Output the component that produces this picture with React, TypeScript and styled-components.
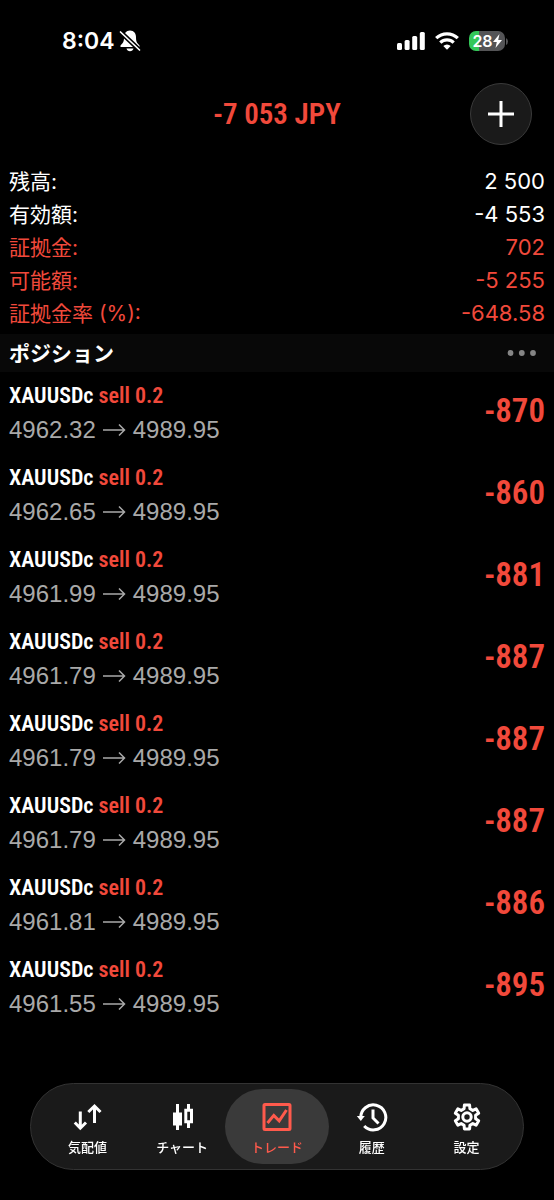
import React from "react";
import styled, { createGlobalStyle } from "styled-components";

const RED = "#f1493b";
const sans = '"Inter", "Noto Sans CJK JP", sans-serif';
const narrow = '"Roboto Condensed", "Liberation Sans Narrow", "Noto Sans CJK JP", sans-serif';

const GlobalStyle = createGlobalStyle`
  * { box-sizing: border-box; }
  body { margin: 0; background: #000; color: #fff; font-family: ${sans}; }
  button { border: 0; padding: 0; background: none; color: inherit; font: inherit; cursor: pointer; }
  h1, h2, p, dl, dd, dt, ul { margin: 0; padding: 0; font: inherit; }
`;

const Screen = styled.div`
  min-height: 100vh;
  padding-bottom: 118px;
`;

const StatusBar = styled.div`
  display: flex;
  align-items: center;
  justify-content: space-between;
  height: 82px;
  padding: 0 46px 0 62px;
`;

const StatusGroup = styled.div<{ $gap: number }>`
  display: flex;
  align-items: center;
  gap: ${(p) => p.$gap}px;
`;

const Clock = styled.time`
  font-size: 23px;
  line-height: 28px;
  font-weight: 600;
`;

const Battery = styled.div`
  display: flex;
  align-items: center;
  gap: 1px;
`;

const BatteryBody = styled.div`
  display: flex;
  align-items: center;
  justify-content: center;
  width: 36px;
  height: 20px;
  border-radius: 7px;
  background: linear-gradient(to right, #34c759 28%, #545456 28%);
  font-size: 16px;
  line-height: 20px;
  font-weight: 600;
`;

const Header = styled.header`
  display: grid;
  grid-template-columns: 1fr auto 1fr;
  align-items: center;
  height: 64px;
  padding: 0 22px;
`;

const Total = styled.h1`
  grid-column: 2;
  color: ${RED};
  font-family: ${narrow};
  font-size: 29px;
  line-height: 36px;
  font-weight: 600;
`;

const AddButton = styled.button`
  display: grid;
  place-items: center;
  justify-self: end;
  width: 62px;
  height: 62px;
  border: 1px solid #3a3a3a;
  border-radius: 50%;
  background: #1a1a1a;
`;

const Summary = styled.dl`
  padding: 19px 9px 4px;
`;

const SummaryRow = styled.div<{ $alert?: boolean }>`
  display: flex;
  justify-content: space-between;
  color: ${(p) => (p.$alert ? RED : "#fff")};
  font-size: 22px;
  line-height: 33px;
`;

const Label = styled.dt`
  font-size: 21px;
`;

const SectionBar = styled.div`
  display: flex;
  align-items: center;
  justify-content: space-between;
  height: 38px;
  padding: 0 17px 0 9px;
  background: #080808;
`;

const SectionTitle = styled.h2`
  padding-bottom: 2px;
  font-family: "Noto Sans CJK JP", sans-serif;
  font-size: 21px;
  line-height: 30px;
  font-weight: 700;
`;

const MoreButton = styled.button`
  display: flex;
`;

const List = styled.ul`
  list-style: none;
`;

const Position = styled.li`
  display: flex;
  align-items: center;
  justify-content: space-between;
  height: 82px;
  padding: 0 9px;
`;

const Symbol = styled.p`
  font-family: ${narrow};
  font-size: 22px;
  line-height: 34px;
  font-weight: 600;
`;

const Side = styled.span`
  color: ${RED};
`;

const Prices = styled.p`
  display: flex;
  align-items: center;
  gap: 7px;
  color: #a9a9a9;
  font-family: "Liberation Sans", sans-serif;
  font-size: 24px;
  line-height: 34px;
`;

const Profit = styled.span`
  padding-bottom: 4px;
  color: ${RED};
  font-family: ${narrow};
  font-size: 33px;
  line-height: 40px;
  font-weight: 600;
`;

const TabBar = styled.nav`
  position: fixed;
  left: 30px;
  right: 30px;
  bottom: 30px;
  display: grid;
  grid-template-columns: repeat(5, 1fr);
  height: 87px;
  padding: 5px 9px;
  border: 1px solid #333;
  border-radius: 44px;
  background: #1a1a1a;
`;

const Tab = styled.button<{ $active?: boolean }>`
  display: flex;
  flex-direction: column;
  align-items: center;
  justify-content: center;
  gap: 4px;
  margin: 0 -5px;
  padding-top: 4px;
  border-radius: 38px;
  background: ${(p) => (p.$active ? "#3a3a3a" : "transparent")};
  color: ${(p) => (p.$active ? "#ff5a4c" : "#fff")};
`;

const TabLabel = styled.span`
  font-family: "Noto Sans CJK JP", sans-serif;
  font-size: 13px;
  line-height: 20px;
  font-weight: 500;
`;

const TabIcon = ({ children }: { children: React.ReactNode }) => (
  <svg width="32" height="32" viewBox="0 0 32 32" fill="none" stroke="currentColor" strokeWidth="3" aria-hidden="true">
    {children}
  </svg>
);

const QuotesIcon = () => (
  <TabIcon>
    <path d="M9.3 10.5V27M3.8 21.5l5.500 5.700 5.700-5.700M23.500 22V5M17.300 11l6.200-6 6 6" />
  </TabIcon>
);

const ChartIcon = () => (
  <TabIcon>
    <path d="M7 11.500h9v13H7z" fill="currentColor" stroke="none" />
    <path d="M11.500 3v26M22.500 3v6M22.500 20v7M19.800 9.300h5.700v11.400h-5.700z" />
  </TabIcon>
);

const TradeIcon = () => (
  <TabIcon>
    <rect x="3" y="3.500" width="26" height="25" rx="1" />
    <path d="M6.500 22l6.300-7.600 5.400 5.400L25.500 9" />
  </TabIcon>
);

const HistoryIcon = () => (
  <TabIcon>
    <path d="M4.800 17A12.500 12.500 0 1 1 8.200 25" />
    <path d="M.8 15h8L4.800 20z" fill="currentColor" stroke="none" />
    <path d="M17 8.500v8.500l5.500 5.500" />
  </TabIcon>
);

const SettingsIcon = () => (
  <TabIcon>
    <path
      d="M13.100 7.700L13.400 4h5.200l.3 3.700 2.900 1.700 3.300-1.600 2.600 4.400-3.100 2.100v3.400l3.100 2.100-2.600 4.400-3.300-1.600-2.900 1.700-.3 3.700h-5.200l-.3-3.700-2.900-1.700-3.300 1.600-2.600-4.400 3.100-2.100v-3.400l-3.100-2.100 2.600-4.400 3.300 1.600z"
      strokeLinejoin="round"
    />
    <circle cx="16" cy="16" r="4.200" />
  </TabIcon>
);

const MutedBellIcon = () => (
  <svg width="22" height="22" viewBox="0 0 22 22" aria-hidden="true">
    <path
      d="M11 .5C7 .5 5 3.500 5 7.500 5 12 4 13 1.500 15.500V17h19v-1.500C18 13 17 12 17 7.500 17 3.500 15 .5 11 .5zM7.500 18.500h7c-.5 1.700-1.700 2.700-3.500 2.700s-3-1-3.500-2.700z"
      fill="#fff"
    />
    <path d="M.5 1l21 20" stroke="#000" strokeWidth="4.600" />
    <path d="M1.500 2l19 18" stroke="#fff" strokeWidth="1.700" strokeLinecap="round" />
  </svg>
);

const SignalIcon = () => (
  <svg width="28" height="18" viewBox="0 0 28 18" fill="#fff" aria-hidden="true">
    <rect x="0" y="11" width="5" height="7" rx="1.500" />
    <rect x="7.600" y="8" width="5" height="10" rx="1.500" />
    <rect x="15.200" y="4" width="5" height="14" rx="1.500" />
    <rect x="22.800" y="0" width="5" height="18" rx="1.500" />
  </svg>
);

const WifiIcon = () => (
  <svg width="24" height="18" viewBox="0 0 24 18" fill="none" stroke="#fff" strokeWidth="3.200" aria-hidden="true">
    <path d="M1.200 6.200a15.500 15.500 0 0 1 21.600 0M5.300 10.600a9.600 9.600 0 0 1 13.400 0" />
    <path d="M12 17.800l-3.700-3.700a5.300 5.300 0 0 1 7.400 0z" fill="#fff" stroke="none" />
  </svg>
);

const BoltIcon = () => (
  <svg width="9" height="14" viewBox="0 0 9 14" fill="#fff" aria-hidden="true">
    <path d="M6.500 0L0 8h3.800L2.500 14 9 6H5.200z" />
  </svg>
);

const summary = [
  { label: "残高:", value: "2 500" },
  { label: "有効額:", value: "-4 553" },
  { label: "証拠金:", value: "702", alert: true },
  { label: "可能額:", value: "-5 255", alert: true },
  { label: "証拠金率 (%):", value: "-648.58", alert: true },
];

const positions = [
  { open: "4962.32", profit: "-870" },
  { open: "4962.65", profit: "-860" },
  { open: "4961.99", profit: "-881" },
  { open: "4961.79", profit: "-887" },
  { open: "4961.79", profit: "-887" },
  { open: "4961.79", profit: "-887" },
  { open: "4961.81", profit: "-886" },
  { open: "4961.55", profit: "-895" },
];

const tabs = [
  { label: "気配値", Icon: QuotesIcon },
  { label: "チャート", Icon: ChartIcon },
  { label: "トレード", Icon: TradeIcon, active: true },
  { label: "履歴", Icon: HistoryIcon },
  { label: "設定", Icon: SettingsIcon },
];

export default function App() {
  return (
    <Screen>
      <GlobalStyle />
      <StatusBar>
        <StatusGroup $gap={4}>
          <Clock>8:04</Clock>
          <MutedBellIcon />
        </StatusGroup>
        <StatusGroup $gap={10}>
          <SignalIcon />
          <WifiIcon />
          <Battery>
            <BatteryBody>
              28
              <BoltIcon />
            </BatteryBody>
            <svg width="2" height="7" viewBox="0 0 2 7" aria-hidden="true">
              <path d="M0 0q2 1 2 3.500T0 7z" fill="#545456" />
            </svg>
          </Battery>
        </StatusGroup>
      </StatusBar>
      <Header>
        <Total>-7 053 JPY</Total>
        <AddButton aria-label="新規注文">
          <svg width="26" height="26" viewBox="0 0 26 26" stroke="#fff" strokeWidth="3" aria-hidden="true">
            <path d="M13 0v26M0 13h26" />
          </svg>
        </AddButton>
      </Header>
      <main>
        <Summary>
          {summary.map((row) => (
            <SummaryRow key={row.label} $alert={row.alert}>
              <Label>{row.label}</Label>
              <dd>{row.value}</dd>
            </SummaryRow>
          ))}
        </Summary>
        <SectionBar>
          <SectionTitle>ポジション</SectionTitle>
          <MoreButton aria-label="メニュー">
            <svg width="30" height="8" viewBox="0 0 30 8" fill="#858585" aria-hidden="true">
              <circle cx="3.500" cy="4" r="2.900" />
              <circle cx="14.800" cy="4" r="2.900" />
              <circle cx="26" cy="4" r="2.900" />
            </svg>
          </MoreButton>
        </SectionBar>
        <List>
          {positions.map((position, index) => (
            <Position key={index}>
              <div>
                <Symbol>
                  XAUUSDc <Side>sell 0.2</Side>
                </Symbol>
                <Prices>
                  {position.open}
                  <svg width="23" height="14" viewBox="0 0 23 14" fill="none" stroke="currentColor" strokeWidth="1.500" role="img" aria-label="→">
                    <path d="M0 7h21.500M16 1.500L21.500 7 16 12.500" />
                  </svg>
                  4989.95
                </Prices>
              </div>
              <Profit>{position.profit}</Profit>
            </Position>
          ))}
        </List>
      </main>
      <TabBar>
        {tabs.map(({ label, Icon, active }) => (
          <Tab key={label} $active={active} aria-current={active ? "page" : undefined}>
            <Icon />
            <TabLabel>{label}</TabLabel>
          </Tab>
        ))}
      </TabBar>
    </Screen>
  );
}
